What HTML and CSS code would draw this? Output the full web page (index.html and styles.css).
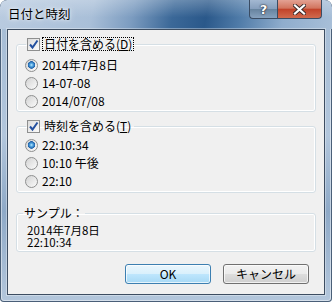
FILE: index.html
```html
<!DOCTYPE html>
<html lang="ja">
<head>
    <meta charset="UTF-8">
    <title>日付と時刻</title>
    <link rel="stylesheet" href="styles.css">
</head>
<body>
    <div class="window">
        <div class="titlebar">
            <span class="title">日付と時刻</span>
            <div class="caption">
                <span class="cap help">?</span>
                <span class="cap close">
                    <svg width="13" height="11" viewBox="0 0 13 11">
                        <path d="M2 1.5 L11 9.5 M11 1.5 L2 9.5" stroke="#3b2a2a" stroke-width="4" stroke-linecap="square"/>
                        <path d="M2 1.5 L11 9.5 M11 1.5 L2 9.5" stroke="#fff" stroke-width="2.2" stroke-linecap="square"/>
                    </svg>
                </span>
            </div>
        </div>
        <div class="client">
            <fieldset class="group date">
                <legend>
                    <span class="check">
                        <svg width="11" height="11" viewBox="0 0 11 11">
                            <path d="M2 5.5 L4.5 8.5 L9.5 1.5" stroke="#24509f" stroke-width="2" fill="none"/>
                        </svg>
                    </span>
                    <span class="label focus">日付を含める(<u>D</u>)</span>
                </legend>
                <div class="option"><span class="radio on"></span>2014年7月8日</div>
                <div class="option"><span class="radio"></span>14-07-08</div>
                <div class="option"><span class="radio"></span>2014/07/08</div>
            </fieldset>
            <fieldset class="group time">
                <legend>
                    <span class="check">
                        <svg width="11" height="11" viewBox="0 0 11 11">
                            <path d="M2 5.5 L4.5 8.5 L9.5 1.5" stroke="#24509f" stroke-width="2" fill="none"/>
                        </svg>
                    </span>
                    <span class="label">時刻を含める(<u>T</u>)</span>
                </legend>
                <div class="option"><span class="radio on"></span>22:10:34</div>
                <div class="option"><span class="radio"></span>10:10 午後</div>
                <div class="option"><span class="radio"></span>22:10</div>
            </fieldset>
            <fieldset class="group sample">
                <legend>サンプル：</legend>
                <div class="line">2014年7月8日</div>
                <div class="line">22:10:34</div>
            </fieldset>
            <div class="buttons">
                <button class="btn default">OK</button>
                <button class="btn">キャンセル</button>
            </div>
        </div>
    </div>
</body>
</html>
```

FILE: styles.css
```css
*{
    margin: 0;
    padding: 0;
    box-sizing: border-box;
}
html,body{
    width: 332px;
    height: 302px;
    overflow: hidden;
    background: #fff;
}
body{
    font-family: "Noto Sans CJK JP", "Noto Sans", sans-serif;
    font-size: 12px;
    color: #000;
}
.window{
    width: 332px;
    height: 302px;
    border-radius: 7px 7px 4px 4px;
    background: linear-gradient(180deg, #a4bbd4 0%, #b2c6dc 45%, #8ea9c7 70%, #b4c7dc 100%);
    box-shadow: inset 0 0 0 1px #4a5f78, inset 0 0 0 2px rgba(255,255,255,.45);
    overflow: hidden;
}
.titlebar{
    height: 29px;
    display: flex;
    justify-content: space-between;
    align-items: flex-start;
    padding-left: 8px;
    border-radius: 7px 7px 0 0;
    background:
        linear-gradient(180deg, rgba(255,255,255,.25), rgba(255,255,255,0) 60%),
        linear-gradient(100deg, #b9cbe0 0%, #a9bfd8 28%, #7c9cc0 40%, #3b6898 52%, #2a588a 62%, #4f7ba8 72%, #8fadcd 85%, #a8bfd8 100%);
}
.title{
    margin-top: 6px;
    line-height: 16px;
    font-size: 12.5px;
    text-shadow: 0 0 6px rgba(255,255,255,.9), 0 0 3px rgba(255,255,255,.8);
}
.caption{
    display: flex;
    margin-right: 10px;
}
.cap{
    height: 19px;
    display: flex;
    align-items: center;
    justify-content: center;
    border: 1px solid #3a4c63;
    border-top: 0;
}
.help{
    width: 28px;
    border-radius: 0 0 0 4px;
    border-right: 0;
    background: linear-gradient(180deg, #a3b8d1 0%, #869fbd 48%, #67849f 52%, #86a1be 100%);
    color: #fff;
    font-family: "DejaVu Sans", sans-serif;
    font-weight: bold;
    font-size: 13px;
    text-shadow: 0 0 2px #223, 0 0 1px #000;
}
.close{
    width: 45px;
    border-radius: 0 0 4px 0;
    background: linear-gradient(180deg, #e3a193 0%, #d2755e 45%, #c2432a 52%, #d06a4e 100%);
}
.client{
    height: 266px;
    margin: 0 7px;
    padding: 0 8px;
    border: 1px solid #3d4d61;
    background: #f0f0f0;
    box-shadow: 0 0 0 1px rgba(255,255,255,.35);
}
.group{
    border: 1px solid #d5dfe5;
    border-radius: 3px;
    box-shadow: inset 0 0 0 1px #fff;
    padding: 0 8px;
    min-width: 0;
}
.group legend{
    display: flex;
    align-items: center;
    height: 14px;
    margin-left: 1px;
    padding: 0 1px;
    line-height: 12px;
}
.date{
    margin-top: 7px;
    padding-top: 5px;
    padding-bottom: 1px;
}
.time{
    margin-top: 7px;
    padding-top: 3px;
    padding-bottom: 2px;
}
.sample{
    margin-top: 13px;
    padding: 4px 10px 3px;
}
.sample legend{
    margin-left: -4px;
}
.line{
    height: 12px;
    font-size: 11.5px;
    line-height: 12px;
}
.check{
    width: 13px;
    height: 13px;
    margin-right: 2px;
    display: flex;
    align-items: center;
    justify-content: center;
    border: 1px solid #8e8f8f;
    background: linear-gradient(135deg, #dcdcdc, #fbfbfb);
}
.label{
    padding: 0 1px;
    border: 1px dotted transparent;
}
.focus{
    border-color: #000;
}
.option{
    display: flex;
    align-items: center;
    gap: 4px;
    height: 18px;
    line-height: 12px;
}
.radio{
    width: 13px;
    height: 13px;
    border-radius: 50%;
    border: 1px solid #8e8f8f;
    background: linear-gradient(135deg, #d2d2d2, #fbfbfb);
}
.radio.on{
    background:
        radial-gradient(circle at 50% 45%, #c2ecff 0, #56a9e2 1.5px, #1d5fa8 3.5px, rgba(29,95,168,0) 4px),
        linear-gradient(135deg, #d2d2d2, #fbfbfb);
}
.buttons{
    display: flex;
    justify-content: flex-end;
    gap: 12px;
    margin-top: 12px;
    padding-right: 7px;
}
.btn{
    width: 86px;
    height: 20px;
    font-family: inherit;
    font-size: 12px;
    line-height: 12px;
    color: #000;
    border: 1px solid #707070;
    border-radius: 3px;
    background: linear-gradient(180deg, #f2f2f2 0%, #ebebeb 50%, #dddddd 51%, #cfcfcf 100%);
    box-shadow: inset 0 0 0 1px rgba(255,255,255,.7);
}
.btn.default{
    border-color: #3c7fb1;
    background: linear-gradient(180deg, #eaf6fd 0%, #d9f0fc 50%, #bee6fd 51%, #a7d9f5 100%);
}
```
